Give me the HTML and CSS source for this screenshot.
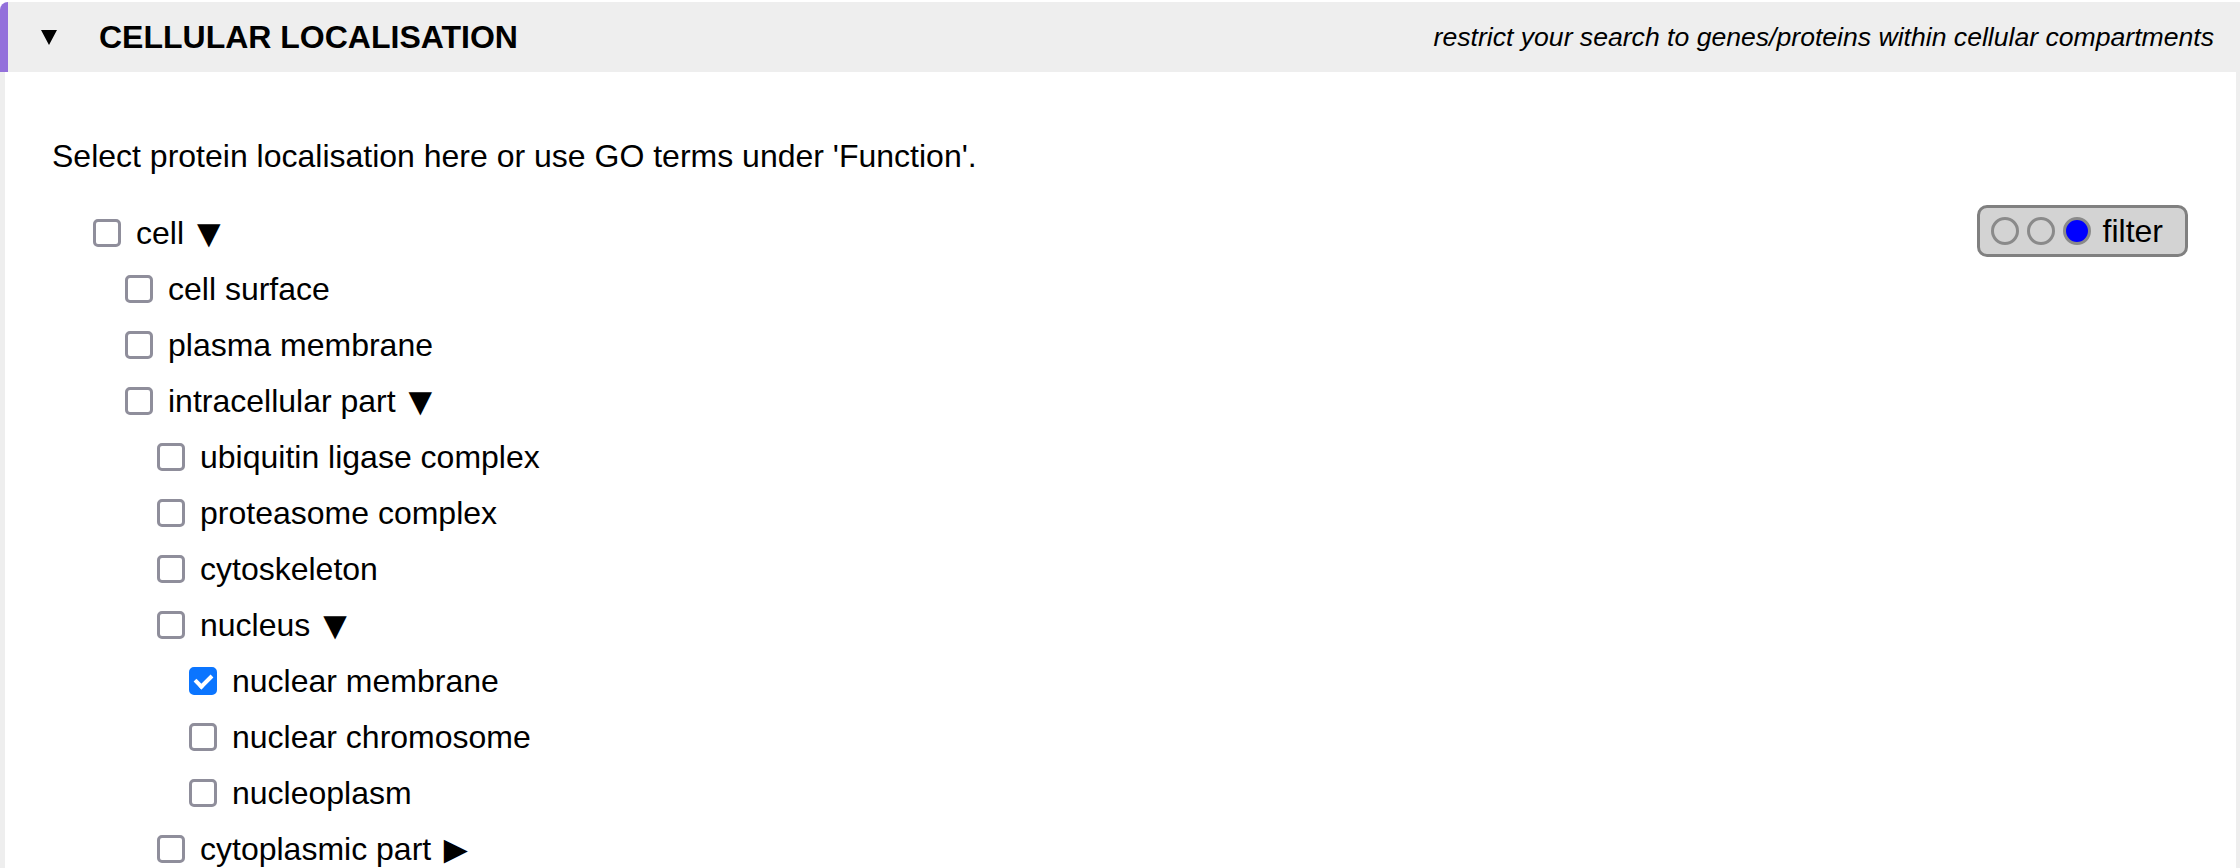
FILE: index.html
```html
<!DOCTYPE html>
<html lang="en">
<head>
  <meta charset="UTF-8" />
  <title>Cellular localisation</title>
  <link rel="stylesheet" href="styles.css">
</head>
<body>
  <div class="panel">
    <div class="panel-head">
      <span class="toggle">
        <svg width="16" height="15" viewBox="0 0 16 15"><polygon points="0,0 16,0 8,15" /></svg>
      </span>
      <span class="panel-title">CELLULAR LOCALISATION</span>
      <span class="panel-hint">restrict your search to genes/proteins within cellular compartments</span>
    </div>

    <div class="panel-body">
      <p class="intro">Select protein localisation here or use GO terms under 'Function'.</p>

      <div class="tree-wrap">
        <ul class="tree">
          <li>
            <label class="node"><input type="checkbox">cell <span class="arrow">▼</span></label>
            <ul>
              <li><label class="node"><input type="checkbox">cell surface</label></li>
              <li><label class="node"><input type="checkbox">plasma membrane</label></li>
              <li>
                <label class="node"><input type="checkbox">intracellular part <span class="arrow">▼</span></label>
                <ul>
                  <li><label class="node"><input type="checkbox">ubiquitin ligase complex</label></li>
                  <li><label class="node"><input type="checkbox">proteasome complex</label></li>
                  <li><label class="node"><input type="checkbox">cytoskeleton</label></li>
                  <li>
                    <label class="node"><input type="checkbox">nucleus <span class="arrow">▼</span></label>
                    <ul>
                      <li><label class="node"><input type="checkbox" checked>nuclear membrane</label></li>
                      <li><label class="node"><input type="checkbox">nuclear chromosome</label></li>
                      <li><label class="node"><input type="checkbox">nucleoplasm</label></li>
                    </ul>
                  </li>
                  <li><label class="node"><input type="checkbox">cytoplasmic part <span class="arrow">►</span></label></li>
                </ul>
              </li>
            </ul>
          </li>
        </ul>

        <div class="filter">
          <span class="dot"></span>
          <span class="dot"></span>
          <span class="dot on"></span>
          <span class="filter-label">filter</span>
        </div>
      </div>
    </div>
  </div>
</body>
</html>
```

FILE: styles.css
```css
html, body {
  margin: 0;
  padding: 0;
  overflow: hidden;
}
body {
  font-family: "Liberation Sans", Arial, sans-serif;
  color: #000;
  background: #fff;
}
.panel {
  margin-top: 2px;
}
.panel-head {
  display: flex;
  align-items: center;
  height: 70px;
  background: #eeeeee;
  border-left: 8px solid #9370db;
  border-top-left-radius: 8px;
  padding: 0 26px 0 33px;
}
.toggle {
  display: flex;
  width: 16px;
  margin-right: 42px;
}
.toggle svg {
  fill: #000;
}
.panel-title {
  font-size: 32px;
  font-weight: bold;
}
.panel-hint {
  margin-left: auto;
  font-size: 26.6px;
  font-style: italic;
}
.panel-body {
  border-left: 5px solid #eeeeee;
  border-right: 4px solid #eeeeee;
  padding: 66px 48px 0 47px;
}
.intro {
  margin: 0 0 30px;
  font-size: 32px;
}
.tree-wrap {
  display: flex;
  justify-content: space-between;
  align-items: flex-start;
}
.tree, .tree ul {
  list-style: none;
  margin: 0;
  padding: 0 0 0 32px;
}
.tree {
  padding-left: 41px;
}
.node {
  display: flex;
  align-items: center;
  height: 56px;
  font-size: 32px;
  white-space: pre;
}
.arrow {
  margin-left: -4px;
  font-size: 40px;
  line-height: 1;
}
.node input {
  appearance: none;
  -webkit-appearance: none;
  box-sizing: border-box;
  width: 28px;
  height: 28px;
  margin: 0 15px 0 0;
  border: 3px solid #8f8e9b;
  border-radius: 5px;
  background: #fff;
  position: relative;
}
.node input:checked {
  background: #0b75ff;
  border-color: #0b75ff;
}
.node input:checked::before {
  content: "";
  position: absolute;
  left: 6px;
  top: 1px;
  width: 7px;
  height: 13px;
  border: solid #fff;
  border-width: 0 4px 4px 0;
  transform: rotate(45deg);
}
.filter {
  display: flex;
  align-items: center;
  gap: 8px;
  box-sizing: border-box;
  height: 52px;
  padding: 0 22px 0 11px;
  border: 3px solid #808080;
  border-radius: 10px;
  background: #d3d3d3;
}
.dot {
  box-sizing: border-box;
  width: 28px;
  height: 28px;
  border: 3px solid #8a8a8a;
  border-radius: 50%;
}
.dot.on {
  background: #0000ff;
}
.filter-label {
  margin-left: 4px;
  font-size: 32px;
}
```
